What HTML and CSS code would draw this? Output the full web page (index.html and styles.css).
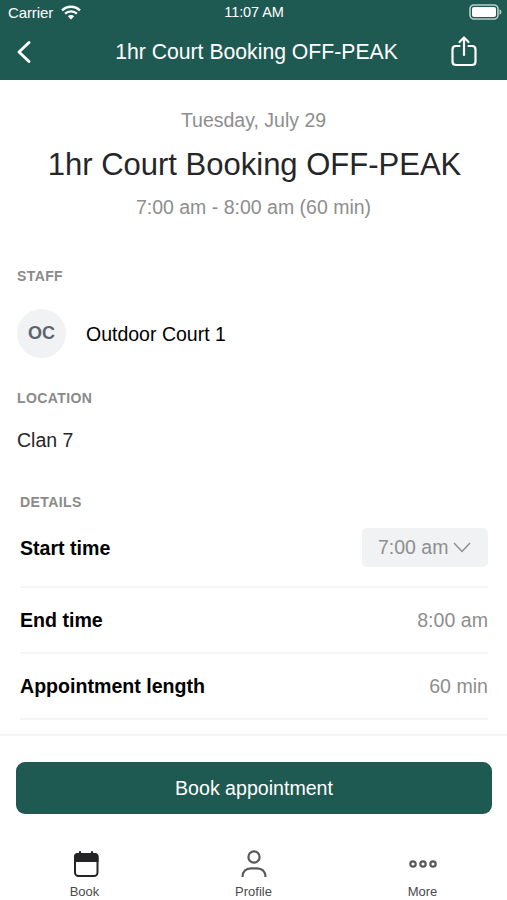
FILE: index.html
```html
<!DOCTYPE html>
<html lang="en">

<head>
    <meta charset="utf-8">
    <title>1hr Court Booking OFF-PEAK</title>
    <link rel="stylesheet" href="styles.css">
</head>

<body>

    <header>
        <div class="status-bar">
            <div class="carrier">
                <span>Carrier</span>
                <svg width="20" height="15" viewBox="0 0 20 15" fill="none" stroke="#fff" stroke-width="2.3">
                    <path d="M1 5.4C6 .5 14 .5 19 5.4" />
                    <path d="M4.1 8.7C7.4 5.5 12.6 5.5 15.9 8.7" />
                    <path d="M10 14.5L6.8 11.2Q10 8.7 13.2 11.2Z" fill="#fff" stroke="none" />
                </svg>
            </div>
            <span class="clock">11:07 AM</span>
            <svg class="battery" width="33" height="16" viewBox="0 0 33 16">
                <rect x="1" y="1" width="28" height="14" rx="4" fill="none" stroke="#b9ceca" stroke-width="1.6" />
                <rect x="3" y="3" width="24" height="10" rx="2" fill="#fff" />
                <path d="M30.5 5.2Q32.5 5.8 32.5 8T30.5 10.8Z" fill="#b9ceca" />
            </svg>
        </div>
        <nav class="title-bar">
            <svg class="back" width="14" height="22" viewBox="0 0 14 22" fill="none" stroke="#fff" stroke-width="2.8" stroke-linecap="round" stroke-linejoin="round">
                <path d="M12 1.5L2 11L12 20.5" />
            </svg>
            <span class="title">1hr Court Booking OFF-PEAK</span>
            <svg class="share" width="26" height="31" viewBox="0 0 26 31" fill="none" stroke="#fff" stroke-width="2.2" stroke-linecap="round" stroke-linejoin="round">
                <path d="M8.5 10H5Q1.5 10 1.5 13.5V25.5Q1.5 29 5 29H21Q24.5 29 24.5 25.5V13.5Q24.5 10 21 10H17.5" />
                <path d="M13 19V2M8.500 6L13 1.5L17.5 6" />
            </svg>
        </nav>
    </header>

    <main>
        <section class="summary">
            <p class="date">Tuesday, July 29</p>
            <h1>1hr Court Booking OFF-PEAK</h1>
            <p class="time">7:00 am - 8:00 am (60 min)</p>
        </section>

        <h2>STAFF</h2>
        <div class="staff">
            <span class="avatar">OC</span>
            <span class="staff-name">Outdoor Court 1</span>
        </div>

        <h2>LOCATION</h2>
        <p class="location">Clan 7</p>

        <section class="details">
            <h2>DETAILS</h2>
            <div class="row start">
                <span class="label">Start time</span>
                <button class="select">
                    <span>7:00 am</span>
                    <svg width="18" height="11" viewBox="0 0 18 11" fill="none" stroke="#8e8f91" stroke-width="1.5">
                        <path d="M1 1L9 9.5L17 1" />
                    </svg>
                </button>
            </div>
            <div class="row">
                <span class="label">End time</span>
                <span class="value">8:00 am</span>
            </div>
            <div class="row">
                <span class="label">Appointment length</span>
                <span class="value">60 min</span>
            </div>
        </section>
    </main>

    <footer>
        <button class="book">Book appointment</button>
        <nav class="tabs">
            <a class="tab">
                <svg class="calendar" width="26" height="28" viewBox="0 0 26 28">
                    <path d="M7 2V6M19 2V6" stroke="#242426" stroke-width="2.2" stroke-linecap="round" />
                    <rect x="2" y="4" width="22.5" height="22" rx="3.5" fill="#fff" stroke="#242426" stroke-width="2" />
                    <path d="M1 12V6.500Q1 3 4.500 3H22Q25.500 3 25.500 6.500V12Z" fill="#242426" />
                </svg>
                <span>Book</span>
            </a>
            <a class="tab">
                <svg width="26" height="28" viewBox="0 0 26 28" fill="none" stroke="#57585a" stroke-width="2.2">
                    <circle cx="13" cy="7" r="5.6" />
                    <path d="M1.5 27C1.5 21.5 5 18.3 10 18.3H16C21 18.3 24.5 21.5 24.5 27" />
                </svg>
                <span>Profile</span>
            </a>
            <a class="tab">
                <svg width="28" height="28" viewBox="0 0 28 28" fill="none" stroke="#57585a" stroke-width="2.2">
                    <circle cx="4" cy="14" r="2.7" />
                    <circle cx="14" cy="14" r="2.7" />
                    <circle cx="24" cy="14" r="2.7" />
                </svg>
                <span>More</span>
            </a>
        </nav>
    </footer>

</body>

</html>
```

FILE: styles.css
```css
* {
    box-sizing: border-box;
}

body {
    font-family: "Liberation Sans", Arial, sans-serif;
    margin: 0;
    height: 900px;
    display: flex;
    flex-direction: column;
    overflow: hidden;
    background-color: white;
    color: #000;
}

h1,
h2,
p {
    margin: 0;
}

svg {
    display: block;
    flex: none;
}

button {
    font-family: inherit;
    border: none;
}

header {
    height: 80px;
    flex: none;
    background-color: #1f5a52;
    color: white;
}

.status-bar {
    display: grid;
    grid-template-columns: 1fr auto 1fr;
    align-items: center;
    height: 24px;
    padding: 0 5px 0 8px;
    font-size: 15px;
    letter-spacing: -0.1px;
}

.carrier {
    display: flex;
    align-items: center;
    gap: 8px;
}

.clock {
    font-size: 14.5px;
    letter-spacing: -0.1px;
    margin-right: 2px;
}

.battery {
    justify-self: end;
}

.title-bar {
    display: flex;
    align-items: center;
    justify-content: space-between;
    height: 55px;
    padding: 0 30px 0 17px;
}

.title {
    font-size: 21.2px;
    padding-left: 31px;
}

main {
    flex: 1;
    min-height: 0;
    overflow: hidden;
    padding: 0 17px;
}

.summary {
    text-align: center;
    padding-top: 28px;
    margin-bottom: 48px;
}

.date,
.time {
    font-size: 19.5px;
    line-height: 24px;
    color: #8e8e8e;
}

h1 {
    font-size: 31px;
    font-weight: normal;
    line-height: 36px;
    margin: 15px 0 12px;
    padding-left: 2px;
    color: #262628;
}

h2 {
    font-size: 14px;
    line-height: 18px;
    letter-spacing: 0.4px;
    color: #8a8a8a;
}

.staff {
    display: flex;
    align-items: center;
    gap: 20px;
    height: 49px;
    margin: 24px 0 31px;
}

.avatar {
    width: 49px;
    height: 49px;
    border-radius: 50%;
    background-color: #f0f2f4;
    color: #5f646c;
    font-size: 18px;
    font-weight: bold;
    line-height: 49px;
    text-align: center;
}

.staff-name,
.location {
    font-size: 19.5px;
    line-height: 24px;
}

.location {
    margin: 21px 0 41px;
    color: #262628;
}

.details {
    padding: 0 2px 0 3px;
}

.row {
    display: flex;
    align-items: center;
    justify-content: space-between;
    height: 66px;
    border-bottom: 2px solid #f5f5f6;
    font-size: 19.6px;
}

.start {
    height: 77px;
}

.label {
    font-weight: bold;
}

.value {
    color: #8e8e8e;
}

.select {
    display: flex;
    align-items: center;
    gap: 5px;
    width: 126px;
    height: 39px;
    margin-bottom: 3px;
    padding: 0 16px;
    border-radius: 5px;
    background-color: #f0f2f3;
    color: #8e8f91;
    font-size: 19.5px;
}

footer {
    flex: none;
    height: 166px;
    padding: 26px 16px 0;
    border-top: 2px solid #f5f5f6;
}

.book {
    display: block;
    width: 476px;
    height: 52px;
    border-radius: 9px;
    background-color: #1f5a52;
    color: white;
    font-size: 19.6px;
}

.tabs {
    display: grid;
    grid-template-columns: repeat(3, 1fr);
    width: 507px;
    margin: 36px -16px 0;
}

.tab {
    display: flex;
    flex-direction: column;
    align-items: center;
    gap: 6px;
    font-size: 13px;
    line-height: 16px;
    color: #4a4a4c;
}

.calendar {
    margin-left: 3px;
}
```
